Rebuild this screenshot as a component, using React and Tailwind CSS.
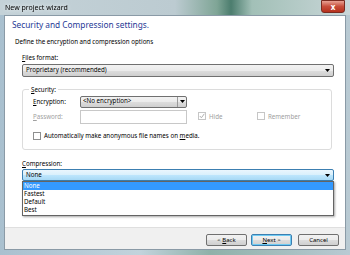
import React from 'react';

const font = { fontFamily: '"Noto Sans", "Liberation Sans", sans-serif' };

function Caret() {
  return (
    <svg width="5" height="3" viewBox="0 0 5 3" className="shrink-0">
      <path d="M0 0h5L2.5 3z" fill="#000" />
    </svg>
  );
}

function Check({ checked, disabled }) {
  return (
    <span className={`w-[8px] h-[8px] shrink-0 border flex items-center justify-center bg-white ${disabled ? 'border-[#c6c6c6]' : 'border-[#8e8f8f]'}`}>
      {checked && (
        <svg width="6" height="6" viewBox="0 0 6 6">
          <path d="M0.8 3l1.6 1.8L5.3 0.8" stroke={disabled ? '#b0b0b0' : '#333'} strokeWidth="1" fill="none" />
        </svg>
      )}
    </span>
  );
}

const btnGrad = 'bg-[linear-gradient(180deg,#f2f2f2,#ebebeb_50%,#dddddd_51%,#cfcfcf)]';

export default function App() {
  return (
    <div style={font} className="w-[350px] h-[255px] flex flex-col bg-[linear-gradient(90deg,#a9c0cf,#c2d3dc_40%,#8fb1a9_60%,#b9cad3)] overflow-hidden">
      {/* title bar */}
      <div className="h-[15px] shrink-0 flex items-center justify-between pl-[5px] pr-[5px] bg-[linear-gradient(90deg,#c4d2d8,#bccbd1_50%,#7fa596_62%,#4c7d6e_66%,#a2c0b7_72%,#c9d6d8)]">
        <span className="text-[7px] text-black leading-none drop-shadow-[0_0_2px_#fff]">New project wizard</span>
        <div className="w-[24px] h-[13px] -mt-[2px] rounded-b-[3px] bg-[linear-gradient(180deg,#e8a193,#c74d3a_50%,#b5301c)] border border-[#7a2b20] flex items-center justify-center">
          <span className="text-white text-[8px] font-bold leading-none">x</span>
        </div>
      </div>

      {/* window body */}
      <div className="flex-1 mx-[4px] mb-[5px] flex flex-col border border-[#8a9aa6]">
        <div className="flex-1 bg-white pl-[7px] pr-[10px] pt-[3px]">
          <div className="text-[8.3px] text-[#1f3a96] leading-[12px]">Security and Compression settings.</div>
          <div className="text-[6.2px] text-black mt-[6px] pl-[3px] leading-[9px]">Define the encryption and compression options</div>

          <div className="pl-[10px] pr-[1px] text-[6.2px]">
            <div className="mt-[7px] leading-[9px]"><u>F</u>iles format:</div>
            <div className={`mt-[1.5px] h-[13px] border border-[#707070] rounded-[2px] ${btnGrad} flex items-center justify-between px-[3px]`}>
              <span className="leading-none">Proprietary (recommended)</span>
              <Caret />
            </div>

            <fieldset className="mt-[8.5px] mr-[2px] border border-[#dcdcdc] rounded-[3px] px-[10px] pb-[9px]">
              <legend className="leading-[9px] px-[2px] -ml-[4px]"><u>S</u>ecurity:</legend>
              <div className="flex items-center h-[12px] mt-[1.5px]">
                <span className="w-[47px]"><u>E</u>ncryption:</span>
                <div className={`w-[107px] h-[12px] border border-[#707070] rounded-[2px] ${btnGrad} flex items-center justify-between pl-[2px]`}>
                  <span className="leading-none">&lt;No encryption&gt;</span>
                  <span className="border-l border-[#9a9a9a] w-[9px] h-full flex items-center justify-center"><Caret /></span>
                </div>
              </div>
              <div className="flex items-center h-[14px] mt-[2px]">
                <span className="w-[47px] text-[#a0a0a0]"><u>P</u>assword:</span>
                <div className="w-[107px] h-[14px] border border-[#c8c8c8] bg-white" />
                <div className="flex items-center gap-[3px] ml-[11px] w-[59px]">
                  <Check checked disabled />
                  <span className="text-[#a0a0a0]">Hide</span>
                </div>
                <div className="flex items-center gap-[3px]">
                  <Check disabled />
                  <span className="text-[#a0a0a0]">Remember</span>
                </div>
              </div>
              <div className="flex items-center gap-[3px] mt-[7.5px] h-[9px]">
                <Check />
                <span>Automatically make anonymous file names on <u>m</u>edia.</span>
              </div>
            </fieldset>

            <div className="mt-[8.5px] leading-[9px]"><u>C</u>ompression:</div>
            <div className="relative">
              <div className="mt-[1.5px] h-[12px] border border-[#3c7fb1] rounded-[2px] bg-[linear-gradient(180deg,#eaf6fd,#d9f0fc_50%,#bee6fd_51%,#a7d9f5)] flex items-center justify-between px-[3px]">
                <span className="leading-none">None</span>
                <Caret />
              </div>
              <div className="absolute left-0 right-0 top-[12px] h-[35px] bg-white border border-[#646464] shadow-[1px_1px_2px_rgba(0,0,0,0.35)] leading-[8px]">
                <div className="bg-[#3399ff] text-white px-[1px]">None</div>
                <div className="px-[1px]">Fastest</div>
                <div className="px-[1px]">Default</div>
                <div className="px-[1px]">Best</div>
              </div>
            </div>
          </div>
        </div>

        {/* footer */}
        <div className="h-[22px] shrink-0 bg-[#f0f0f0] border-t border-[#dfdfdf] flex items-start justify-end pt-[6px] pr-[6px] text-[6px]">
          <button className={`w-[41px] h-[12px] leading-none border border-[#707070] rounded-[2px] ${btnGrad}`}>&lt; <u>B</u>ack</button>
          <button className={`w-[41px] h-[12px] ml-[4px] leading-none border border-[#3c7fb1] rounded-[2px] ${btnGrad} shadow-[inset_0_0_0_1px_#6fcbf3]`}><u>N</u>ext &gt;</button>
          <button className={`w-[41px] h-[12px] ml-[6px] leading-none border border-[#707070] rounded-[2px] ${btnGrad}`}>Cancel</button>
        </div>
      </div>
    </div>
  );
}
